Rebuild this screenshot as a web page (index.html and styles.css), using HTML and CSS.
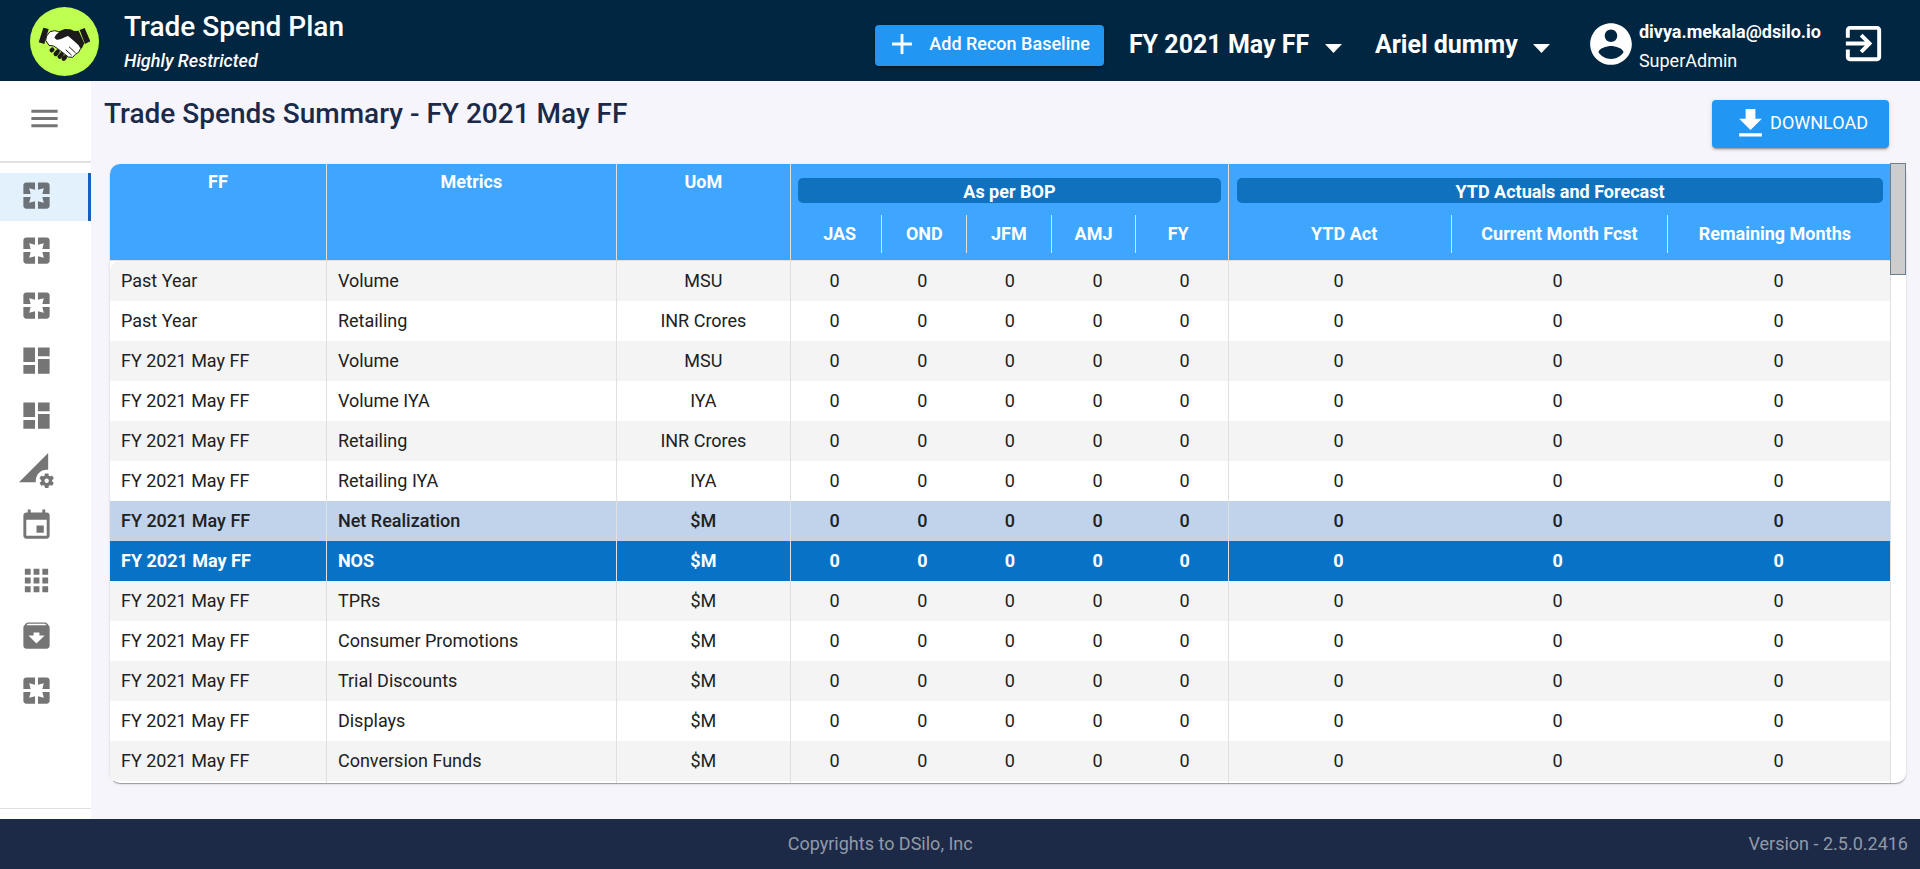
FILE: index.html
```html
<!DOCTYPE html>
<html lang="en">
<head>
<meta charset="utf-8">
<meta name="viewport" content="width=device-width, initial-scale=1">
<title>Trade Spend Plan</title>
<link rel="stylesheet" href="styles.css">
</head>
<body>
<svg class="defs" aria-hidden="true">
  <symbol id="i-pages" viewBox="0 0 24 24"><path d="M3 5v6h5L7 7l4 1V3H5c-1.1 0-2 .9-2 2zm5 8H3v6c0 1.1.9 2 2 2h6v-5l-4 1 1-4zm9 4l-4-1v5h6c1.100 0 2-.9 2-2v-6h-5l1 4zm2-14h-6v5l4-1-1 4h5V5c0-1.100-.9-2-2-2z"/></symbol>
  <symbol id="i-dashboard" viewBox="0 0 24 24"><path d="M3 13h8V3H3v10zm0 8h8v-6H3v6zm10 0h8V11h-8v10zm0-18v6h8V3h-8z"/></symbol>
  <symbol id="i-data" viewBox="0 0 24 24"><path d="M18.99 11.500c.34 0 .67.03 1 .07L20 0 0 20h11.560c-.04-.33-.07-.66-.07-1 0-4.140 3.360-7.500 7.500-7.500zm3.710 7.990c.02-.16.04-.32.04-.49 0-.17-.01-.33-.04-.49l1.060-.83c.09-.08.12-.21.06-.32l-1-1.730c-.06-.11-.19-.15-.31-.11l-1.240.5c-.26-.2-.54-.37-.85-.49l-.19-1.320c-.01-.12-.12-.21-.24-.21h-2c-.12 0-.23.09-.25.21l-.19 1.320c-.3.13-.59.29-.85.49l-1.240-.5c-.11-.04-.24 0-.31.11l-1 1.730c-.06.11-.04.24.06.32l1.060.83c-.02.16-.03.32-.03.49 0 .17.01.33.03.49l-1.060.83c-.09.08-.12.21-.06.32l1 1.730c.06.11.19.15.31.11l1.240-.5c.26.2.54.37.85.49l.19 1.320c.02.12.12.21.25.21h2c.12 0 .23-.09.25-.21l.19-1.320c.3-.13.59-.29.84-.49l1.250.5c.11.04.24 0 .31-.11l1-1.730c.06-.11.03-.24-.06-.32l-1.070-.83zm-3.710 1.010c-.83 0-1.500-.67-1.500-1.500s.67-1.500 1.500-1.500 1.500.67 1.500 1.500-.67 1.500-1.500 1.500z"/></symbol>
  <symbol id="i-event" viewBox="0 0 24 24"><path d="M17 12h-5v5h5v-5zM16 1v2H8V1H6v2H5c-1.110 0-1.990.9-1.990 2L3 19c0 1.100.89 2 2 2h14c1.100 0 2-.9 2-2V5c0-1.100-.9-2-2-2h-1V1h-2zm3 18H5V8h14v11z"/></symbol>
  <symbol id="i-apps" viewBox="0 0 24 24"><path d="M4 8h4V4H4v4zm6 12h4v-4h-4v4zm-6 0h4v-4H4v4zm0-6h4v-4H4v4zm6 0h4v-4h-4v4zm6-10v4h4V4h-4zm-6 4h4V4h-4v4zm6 6h4v-4h-4v4zm0 6h4v-4h-4v4z"/></symbol>
  <symbol id="i-archive" viewBox="0 0 24 24"><path d="M20.540 5.230l-1.390-1.680C18.880 3.210 18.470 3 18 3H6c-.47 0-.88.21-1.160.55L3.460 5.230C3.170 5.570 3 6.020 3 6.500V19c0 1.100.9 2 2 2h14c1.100 0 2-.9 2-2V6.500c0-.48-.17-.93-.46-1.270zM12 17.500L6.500 12H10v-2h4v2h3.500L12 17.500zM5.120 5l.81-1h12l.94 1H5.120z"/></symbol>
  <symbol id="i-menu" viewBox="0 0 24 24"><path d="M3 18h18v-2H3v2zm0-5h18v-2H3v2zm0-7v2h18V6H3z"/></symbol>
</svg>

<header class="topbar">
  <svg class="logo" viewBox="90 21 207 207" role="img" aria-label="Handshake">
    <circle cx="193.500" cy="124.500" r="103.500" fill="#beff50"/>
    <path fill="#1c1a1b" d="M130 83l16 4-13 45-17-5zM239 90l15-6 17 40-16 8z"/>
    <path fill="#fff" stroke="#1c1a1b" stroke-width="3" stroke-linejoin="round" d="M150 95l14-3 12 3 20-4 8 14 34 30 4 10-6 12-10 6-8 9-13-1-10-8-22-17-12-8-14-2-10-15 3-13z"/>
    <path fill="#1c1a1b" d="M163 113c6-12 17-21 31-26l17 1 12 5 13-1 17 38-8 16c-12-14-26-27-41-38-12 4-21 12-34 11z"/>
    <g stroke="#1c1a1b" stroke-linecap="round" fill="none"><path stroke-width="13" d="M157 149l-2 2M173 155l-6 7M185 163l-6 7M195 172l-4 4"/><path stroke-width="3" d="M198 150l16 15M208 141l18 17"/></g>
  </svg>
  <div class="brand">
    <h1 class="brand-name">Trade Spend Plan</h1>
    <p class="brand-note">Highly Restricted</p>
  </div>
  <button class="btn btn-add" type="button">
    <svg class="icon-add" viewBox="0 0 24 24" aria-hidden="true"><path d="M19 13h-6v6h-2v-6H5v-2h6V5h2v6h6v2z"/></svg>
    Add Recon Baseline
  </button>
  <div class="picker">
    <select class="picker-select" aria-label="Forecast"><option>FY 2021 May FF</option></select>
    <svg class="picker-arrow" viewBox="0 0 17 9" aria-hidden="true"><path d="M0 0h17L8.500 9z"/></svg>
  </div>
  <div class="picker">
    <select class="picker-select" aria-label="Brand"><option>Ariel dummy</option></select>
    <svg class="picker-arrow" viewBox="0 0 17 9" aria-hidden="true"><path d="M0 0h17L8.500 9z"/></svg>
  </div>
  <div class="user">
    <svg class="icon-user" viewBox="0 0 24 24" aria-hidden="true"><path d="M12 2C6.480 2 2 6.480 2 12s4.480 10 10 10 10-4.480 10-10S17.520 2 12 2zm0 3c1.660 0 3 1.340 3 3s-1.340 3-3 3-3-1.340-3-3 1.340-3 3-3zm0 14.200c-2.500 0-4.710-1.280-6-3.220.03-1.990 4-3.080 6-3.080 1.990 0 5.970 1.090 6 3.080-1.290 1.940-3.500 3.220-6 3.220z"/></svg>
    <div class="user-text">
      <p class="user-mail">divya.mekala@dsilo.io</p>
      <p class="user-role">SuperAdmin</p>
    </div>
  </div>
  <button class="logout" type="button" aria-label="Log out">
    <svg class="icon-logout" viewBox="0 0 24 24" aria-hidden="true"><path d="M10.090 15.590L11.500 17l5-5-5-5-1.410 1.410L12.670 11H3v2h9.670l-2.580 2.590zM19 3H5c-1.110 0-2 .9-2 2v4h2V5h14v14H5v-4H3v4c0 1.100.89 2 2 2h14c1.100 0 2-.9 2-2V5c0-1.100-.9-2-2-2z"/></svg>
  </button>
</header>

<div class="shell">
  <aside class="sidebar">
    <button class="menu-toggle" type="button" aria-label="Menu"><svg class="icon"><use href="#i-menu"/></svg></button>
    <nav class="nav" aria-label="Main">
      <a class="nav-link is-active" href="#summary" aria-label="Summary"><svg class="icon"><use href="#i-pages"/></svg></a>
      <a class="nav-link" href="#spends" aria-label="Spends"><svg class="icon"><use href="#i-pages"/></svg></a>
      <a class="nav-link" href="#plans" aria-label="Plans"><svg class="icon"><use href="#i-pages"/></svg></a>
      <a class="nav-link" href="#dashboard" aria-label="Dashboard"><svg class="icon"><use href="#i-dashboard"/></svg></a>
      <a class="nav-link" href="#reports" aria-label="Reports"><svg class="icon"><use href="#i-dashboard"/></svg></a>
      <a class="nav-link" href="#settings" aria-label="Data settings"><svg class="icon"><use href="#i-data"/></svg></a>
      <a class="nav-link" href="#calendar" aria-label="Calendar"><svg class="icon"><use href="#i-event"/></svg></a>
      <a class="nav-link" href="#apps" aria-label="Apps"><svg class="icon"><use href="#i-apps"/></svg></a>
      <a class="nav-link" href="#archive" aria-label="Archive"><svg class="icon"><use href="#i-archive"/></svg></a>
      <a class="nav-link" href="#pages" aria-label="Pages"><svg class="icon"><use href="#i-pages"/></svg></a>
    </nav>
  </aside>

  <main class="content">
    <div class="content-head">
      <h2 class="page-title">Trade Spends Summary - FY 2021 May FF</h2>
      <button class="btn btn-download" type="button">
        <svg class="icon-download" viewBox="0 0 24 24" aria-hidden="true"><path d="M19 9h-4V3H9v6H5l7 7 7-7zM5 18v2h14v-2H5z"/></svg>
        DOWNLOAD
      </button>
    </div>

    <div class="card">
      <table class="grid">
        <colgroup>
          <col class="c-ff"><col class="c-metric"><col class="c-uom">
          <col class="c-q"><col class="c-q"><col class="c-q"><col class="c-q"><col class="c-q">
          <col class="c-ytd"><col class="c-ytd"><col>
        </colgroup>
        <thead>
          <tr>
            <th class="sep">FF</th>
            <th class="sep">Metrics</th>
            <th class="sep">UoM</th>
            <th class="sep group" colspan="5">
              <div class="pill">As per BOP</div>
              <div class="subs"><span>JAS</span><span>OND</span><span>JFM</span><span>AMJ</span><span>FY</span></div>
            </th>
            <th class="group group-ytd" colspan="3">
              <div class="pill">YTD Actuals and Forecast</div>
              <div class="subs"><span>YTD Act</span><span>Current Month Fcst</span><span>Remaining Months</span></div>
            </th>
          </tr>
        </thead>
        <tbody>
          <tr><td>Past Year</td><td>Volume</td><td>MSU</td><td>0</td><td>0</td><td>0</td><td>0</td><td>0</td><td>0</td><td>0</td><td>0</td></tr>
          <tr><td>Past Year</td><td>Retailing</td><td>INR Crores</td><td>0</td><td>0</td><td>0</td><td>0</td><td>0</td><td>0</td><td>0</td><td>0</td></tr>
          <tr><td>FY 2021 May FF</td><td>Volume</td><td>MSU</td><td>0</td><td>0</td><td>0</td><td>0</td><td>0</td><td>0</td><td>0</td><td>0</td></tr>
          <tr><td>FY 2021 May FF</td><td>Volume IYA</td><td>IYA</td><td>0</td><td>0</td><td>0</td><td>0</td><td>0</td><td>0</td><td>0</td><td>0</td></tr>
          <tr><td>FY 2021 May FF</td><td>Retailing</td><td>INR Crores</td><td>0</td><td>0</td><td>0</td><td>0</td><td>0</td><td>0</td><td>0</td><td>0</td></tr>
          <tr><td>FY 2021 May FF</td><td>Retailing IYA</td><td>IYA</td><td>0</td><td>0</td><td>0</td><td>0</td><td>0</td><td>0</td><td>0</td><td>0</td></tr>
          <tr class="row-net"><td>FY 2021 May FF</td><td>Net Realization</td><td>$M</td><td>0</td><td>0</td><td>0</td><td>0</td><td>0</td><td>0</td><td>0</td><td>0</td></tr>
          <tr class="row-nos"><td>FY 2021 May FF</td><td>NOS</td><td>$M</td><td>0</td><td>0</td><td>0</td><td>0</td><td>0</td><td>0</td><td>0</td><td>0</td></tr>
          <tr><td>FY 2021 May FF</td><td>TPRs</td><td>$M</td><td>0</td><td>0</td><td>0</td><td>0</td><td>0</td><td>0</td><td>0</td><td>0</td></tr>
          <tr><td>FY 2021 May FF</td><td>Consumer Promotions</td><td>$M</td><td>0</td><td>0</td><td>0</td><td>0</td><td>0</td><td>0</td><td>0</td><td>0</td></tr>
          <tr><td>FY 2021 May FF</td><td>Trial Discounts</td><td>$M</td><td>0</td><td>0</td><td>0</td><td>0</td><td>0</td><td>0</td><td>0</td><td>0</td></tr>
          <tr><td>FY 2021 May FF</td><td>Displays</td><td>$M</td><td>0</td><td>0</td><td>0</td><td>0</td><td>0</td><td>0</td><td>0</td><td>0</td></tr>
          <tr><td>FY 2021 May FF</td><td>Conversion Funds</td><td>$M</td><td>0</td><td>0</td><td>0</td><td>0</td><td>0</td><td>0</td><td>0</td><td>0</td></tr>
        </tbody>
        <tfoot aria-hidden="true">
          <tr><td></td><td></td><td></td><td colspan="5"></td><td colspan="3"></td></tr>
        </tfoot>
      </table>
      <div class="scroll-track"><div class="scroll-thumb"></div></div>
    </div>
  </main>
</div>

<footer class="footer">
  <span class="copyright">Copyrights to DSilo, Inc</span>
  <span>Version - 2.5.0.2416</span>
</footer>
</body>
</html>
```
FILE: styles.css
```css
*, *::before, *::after { box-sizing: border-box; }

body {
  margin: 0;
  min-height: 100vh;
  display: flex;
  flex-direction: column;
  background: #f6f5fc;
  color: #212121;
  font: 400 18px/24px Roboto, sans-serif;
}

h1, h2, p { margin: 0; }
.defs { display: none; }
svg { fill: currentColor; flex: none; display: block; }

/* Top bar */
.topbar {
  display: flex;
  align-items: center;
  height: 81px;
  padding: 1px 33px 0 30px;
  background: #002641;
  color: #fff;
}
.logo { width: 69px; height: 69px; }
.brand { margin: 0 auto 0 25px; }
.brand-name { font-size: 28px; line-height: 40px; font-weight: 500; }
.brand-note { line-height: 28px; font-style: italic; font-weight: 500; }

.btn {
  display: flex;
  align-items: center;
  border: 0;
  border-radius: 4px;
  background: #2196f3;
  color: #fff;
  font: inherit;
  box-shadow: 0 3px 1px -2px rgba(0, 0, 0, .2), 0 2px 2px rgba(0, 0, 0, .14), 0 1px 5px rgba(0, 0, 0, .12);
}
.btn-add { height: 41px; margin-top: 9px; padding: 0 14px 3px 10px; gap: 10px; font-weight: 500; }
.icon-add { width: 34px; height: 34px; }

.picker { display: flex; align-items: center; gap: 15px; margin: 8px 0 0 25px; }
.picker + .picker { margin-left: 33px; }
.picker-select {
  appearance: none;
  border: 0;
  padding: 0;
  background: transparent;
  color: #fff;
  font: 700 25px/32px Roboto, sans-serif;
}
.picker-select option { color: #212121; }
.picker-arrow { width: 17px; height: 9px; margin-top: 6px; }

.user { display: flex; align-items: center; gap: 3px; margin: 6px 0 0 36px; }
.icon-user { width: 50px; height: 50px; }
.user-text { padding-top: 3px; }
.user-mail { line-height: 29px; font-weight: 700; }
.user-role { line-height: 29px; }
.logout { margin: 5px 0 0 19px; padding: 0; border: 0; background: none; color: #fff; }
.icon-logout { width: 47px; height: 47px; }

/* Shell */
.shell { flex: 1; display: flex; }
.sidebar {
  flex: none;
  width: 91px;
  display: flex;
  flex-direction: column;
  padding-bottom: 10px;
  background: #fff;
  color: #757575;
}
.icon { width: 35px; height: 35px; }
.menu-toggle {
  display: flex;
  align-items: center;
  height: 82px;
  padding: 0 0 6px 27px;
  border: 0;
  border-bottom: 2px solid #e0e0e0;
  background: none;
  color: inherit;
}
.nav {
  flex: 1;
  display: flex;
  flex-direction: column;
  gap: 7px;
  padding-top: 10px;
  border-bottom: 1px solid #e0e0e0;
}
.nav-link {
  display: flex;
  align-items: center;
  height: 48px;
  padding-left: 19px;
  padding-bottom: 4px;
  border-right: 3px solid transparent;
  color: inherit;
}
.is-active { background: #e3f1fc; border-right-color: #1560bd; color: #6b7378; }

/* Content */
.content { flex: 1; min-width: 0; padding: 0 14px 35px 13px; }
.content-head {
  display: flex;
  justify-content: space-between;
  align-items: flex-start;
  height: 83px;
  padding-right: 17px;
}
.page-title { margin-top: 15px; font-size: 28px; line-height: 36px; font-weight: 500; color: #1b2a49; }
.btn-download { height: 48px; margin-top: 19px; padding: 0 21px 2px 19px; }
.icon-download { width: 39px; height: 39px; }

/* Table card */
.card {
  display: flex;
  margin-left: 6px;
  border-radius: 10px;
  background: #fff;
  box-shadow: 0 2px 1px -1px rgba(0, 0, 0, .2), 0 1px 1px rgba(0, 0, 0, .14), 0 1px 3px rgba(0, 0, 0, .12);
}
.grid { flex: 1; table-layout: fixed; border-collapse: separate; border-spacing: 0; width: 100%; }
.c-ff { width: 12.180%; }
.c-metric { width: 16.280%; }
.c-uom { width: 9.770%; }
.c-q { width: 4.920%; }
.c-ytd { width: 12.300%; }

.grid th {
  height: 97px;
  padding: 6px 0 0;
  vertical-align: top;
  background: #3ea6ff;
  border-bottom: 1px solid #e0e0e0;
  color: #fff;
  font-weight: 700;
}
.grid th:first-child { border-top-left-radius: 10px; }
.grid .group { padding: 14px 7px 0; }
.grid .group-ytd { padding: 14px 8px 0; }
.sep { border-right: 1px solid #e0e0e0; }
.pill { height: 25px; line-height: 28px; border-radius: 5px; background: #1072bf; }
.subs { display: flex; margin-top: 12px; line-height: 38px; }
.subs span { flex: 1 1 0; border-right: 1px solid #e0e0e0; }
.subs span:last-child { border-right-color: transparent; }

.grid td { height: 40px; padding: 0; text-align: center; }
.grid tbody td:nth-child(-n+2) { padding-left: 11px; text-align: left; }
.grid tbody td:nth-child(-n+3),
.grid tbody td:nth-child(8),
.grid tbody td:last-child { border-right: 1px solid #e0e0e0; }
.grid tbody tr:nth-child(odd) { background: #f4f4f4; }
.grid tbody tr:first-child { background: none; }
.grid tbody tr:first-child td { background: #f4f4f4; }
.grid tbody tr:first-child td:first-child { border-top-left-radius: 10px; }
.grid tbody tr.row-net:nth-child(n) { background: #c0d3eb; font-weight: 500; }
.grid tbody tr.row-nos:nth-child(n) { background: #0873c6; color: #fff; font-weight: 700; }
.grid tfoot td { height: 2px; border-right: 1px solid #e0e0e0; }

.scroll-track { flex: none; width: 15px; }
.scroll-thumb { height: 112px; margin: -1px 0 0 -1px; background: #cdcdcd; border: 1px solid #6b7f92; }

/* Footer */
.footer {
  display: flex;
  align-items: center;
  height: 50px;
  padding: 0 12px;
  background: #1c2a48;
  color: #9299a6;
}
.copyright { flex: 1; text-align: center; }
```
